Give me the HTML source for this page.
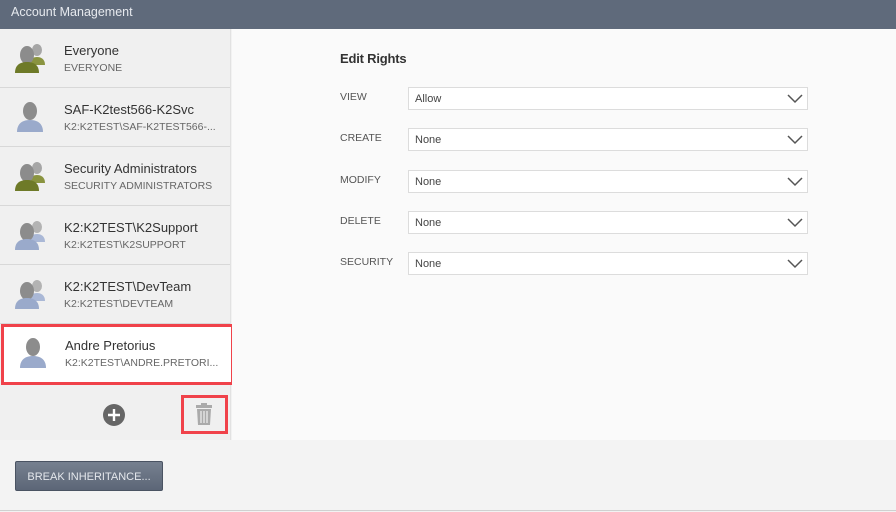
<!DOCTYPE html>
<html><head><meta charset="utf-8"><style>
*{margin:0;padding:0;box-sizing:border-box}
body{width:896px;height:512px;overflow:hidden;background:#f2f2f2;font-family:"Liberation Sans",sans-serif;position:relative}
.hdr{position:absolute;left:0;top:0;width:896px;height:29px;background:#5f6a7b;color:#e6e9ee;font-size:12.5px;padding:5px 0 0 11px}
.left{position:absolute;left:0;top:29px;width:231px;height:411px;background:#f0f0f0;border-right:1px solid #e2e2e2}
.item{position:absolute;left:0;width:230px;height:59px;border-bottom:1px solid #d8d8d8}
.item svg{position:absolute;left:13px;top:12px}
.n{position:absolute;left:64px;top:14px;font-size:13px;color:#333}
.s{position:absolute;left:64px;top:33px;font-size:10.5px;color:#666;white-space:nowrap}
.sel{background:#fff;border:3px solid #f0424a;left:1px;width:233px;height:61px}
.right{position:absolute;left:232px;top:29px;width:664px;height:411px;background:#fafafa}
.lbl{position:absolute;left:340px;font-size:10.5px;color:#555}
.dd{position:absolute;left:408px;width:400px;height:23px;background:#fff;border:1px solid #dcdcdc;font-size:11px;color:#444;padding:5px 0 0 6px}
.dd svg{position:absolute;right:4px;top:6px}
.btn{position:absolute;left:15px;top:461px;width:148px;height:30px;background:linear-gradient(#76808f,#5c6677);border:1px solid #4a5362;border-radius:2px;color:#e4e7ec;font-size:11px;text-align:center;padding-top:9px}
</style></head><body>
<div class="hdr">Account Management</div>
<div class="left">
<div class="item" style="top:0"><svg width="34" height="34"><ellipse cx="24" cy="9" rx="5" ry="6" fill="#a6a6a6"/><path d="M17 24c0-6 3-8 7-8s8 2 8 8z" fill="#8a9440"/><ellipse cx="14" cy="14" rx="7" ry="9" fill="#8c8c8c"/><path d="M2 32c0-8 5-11 12-11s12 3 12 11z" fill="#6e7a28"/></svg><div class="n">Everyone</div><div class="s">EVERYONE</div></div>
<div class="item" style="top:59px"><svg width="34" height="34"><ellipse cx="17" cy="11" rx="7" ry="9" fill="#8c8c8c"/><path d="M4 32c0-9 6-12 13-12s13 3 13 12z" fill="#9aaacb"/></svg><div class="n">SAF-K2test566-K2Svc</div><div class="s">K2:K2TEST\SAF-K2TEST566-...</div></div>
<div class="item" style="top:118px"><svg width="34" height="34"><ellipse cx="24" cy="9" rx="5" ry="6" fill="#a6a6a6"/><path d="M17 24c0-6 3-8 7-8s8 2 8 8z" fill="#8a9440"/><ellipse cx="14" cy="14" rx="7" ry="9" fill="#8c8c8c"/><path d="M2 32c0-8 5-11 12-11s12 3 12 11z" fill="#6e7a28"/></svg><div class="n">Security Administrators</div><div class="s">SECURITY ADMINISTRATORS</div></div>
<div class="item" style="top:177px"><svg width="34" height="34"><ellipse cx="24" cy="9" rx="5" ry="6" fill="#b3b3b3"/><path d="M17 24c0-6 3-8 7-8s8 2 8 8z" fill="#aab8d6"/><ellipse cx="14" cy="14" rx="7" ry="9" fill="#8c8c8c"/><path d="M2 32c0-8 5-11 12-11s12 3 12 11z" fill="#9aaacb"/></svg><div class="n">K2:K2TEST\K2Support</div><div class="s">K2:K2TEST\K2SUPPORT</div></div>
<div class="item" style="top:236px"><svg width="34" height="34"><ellipse cx="24" cy="9" rx="5" ry="6" fill="#b3b3b3"/><path d="M17 24c0-6 3-8 7-8s8 2 8 8z" fill="#aab8d6"/><ellipse cx="14" cy="14" rx="7" ry="9" fill="#8c8c8c"/><path d="M2 32c0-8 5-11 12-11s12 3 12 11z" fill="#9aaacb"/></svg><div class="n">K2:K2TEST\DevTeam</div><div class="s">K2:K2TEST\DEVTEAM</div></div>
<div class="item sel" style="top:295px"><svg width="34" height="34" style="left:12px;top:9px"><ellipse cx="17" cy="11" rx="7" ry="9" fill="#8c8c8c"/><path d="M4 32c0-9 6-12 13-12s13 3 13 12z" fill="#9aaacb"/></svg><div class="n" style="left:61px;top:11px">Andre Pretorius</div><div class="s" style="left:61px;top:30px">K2:K2TEST\ANDRE.PRETORI...</div></div>
<svg style="position:absolute;left:102px;top:374px" width="24" height="24"><circle cx="12" cy="12" r="11" fill="#666"/><path d="M12 6v12M6 12h12" stroke="#fff" stroke-width="2.4"/></svg>
<div style="position:absolute;left:181px;top:366px;width:47px;height:39px;border:3px solid #f0424a"></div>
<svg style="position:absolute;left:195px;top:373px" width="18" height="24"><rect x="6" y="1" width="6" height="2" fill="#aaa"/><rect x="1" y="3" width="16" height="3" fill="#aaa"/><path d="M2 7h14l-1 16H3z" fill="#aaa"/><path d="M6 9v12M9 9v12M12 9v12" stroke="#f0f0f0" stroke-width="1.2"/></svg>
</div>
<div class="right"></div>
<div style="position:absolute;left:340px;top:51px;font-size:13px;color:#333;font-weight:bold;letter-spacing:-0.2px">Edit Rights</div>
<div class="lbl" style="top:91px">VIEW</div><div class="dd" style="top:87px">Allow<svg width="16" height="10"><path d="M1 1l7 7 7-7" stroke="#555" fill="none" stroke-width="1.5"/></svg></div>
<div class="lbl" style="top:132px">CREATE</div><div class="dd" style="top:128px">None<svg width="16" height="10"><path d="M1 1l7 7 7-7" stroke="#555" fill="none" stroke-width="1.5"/></svg></div>
<div class="lbl" style="top:174px">MODIFY</div><div class="dd" style="top:170px">None<svg width="16" height="10"><path d="M1 1l7 7 7-7" stroke="#555" fill="none" stroke-width="1.5"/></svg></div>
<div class="lbl" style="top:215px">DELETE</div><div class="dd" style="top:211px">None<svg width="16" height="10"><path d="M1 1l7 7 7-7" stroke="#555" fill="none" stroke-width="1.5"/></svg></div>
<div class="lbl" style="top:256px">SECURITY</div><div class="dd" style="top:252px">None<svg width="16" height="10"><path d="M1 1l7 7 7-7" stroke="#555" fill="none" stroke-width="1.5"/></svg></div>
<div style="position:absolute;left:0;top:440px;width:896px;height:71px;background:#f3f3f3;border-bottom:1px solid #d0d0d0"></div>
<div class="btn">BREAK INHERITANCE...</div>
</body></html>
